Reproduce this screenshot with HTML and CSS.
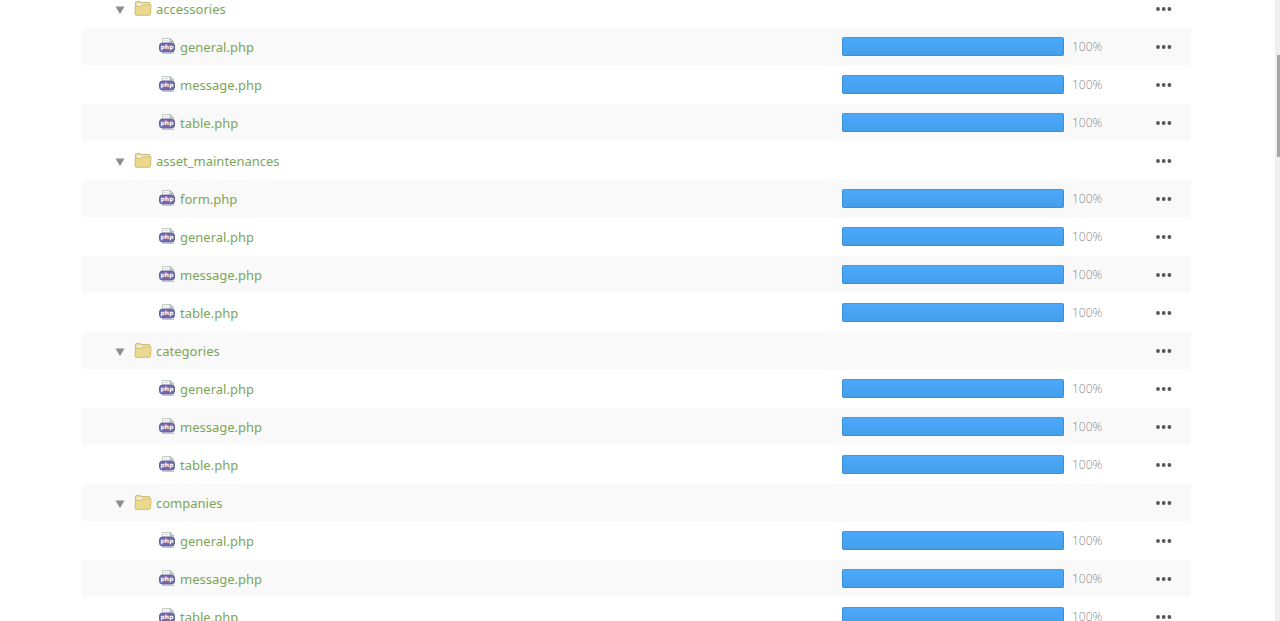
FILE: index.html
```html
<!DOCTYPE html>
<html lang="en">
<head>
    <meta charset="UTF-8">
    <meta name="viewport" content="width=device-width, initial-scale=1.0">
    <title>Files</title>
    <link rel="stylesheet" href="styles.css">
</head>
<body>
    <!-- Icons shared by all rows -->
    <svg class="sprite" aria-hidden="true">
        <symbol id="icon-arrow" viewBox="0 0 10 8">
            <path d="M0.5 0.5h9L5 8z" fill="#8c8c8c"/>
        </symbol>
        <symbol id="icon-folder" viewBox="0 0 18 16">
            <path d="M1.5 14V2.4c0-.5.3-.9.8-.9h3.6l1.2 1h8c.6 0 1 .4 1 1V7l-.6 7z" fill="#ead995" stroke="#cdbb78"/>
            <path d="M2.6 3.6h12.8v3H2.6z" fill="#f7f3e2"/>
            <path d="M1.2 14.2V7c0-.4.3-.7.7-.7h5.3l1.3-1.5h7.9c.5 0 .8.3.7.8l-.8 8.8c0 .5-.4.9-.9.9H2c-.4 0-.8-.4-.8-1.1z" fill="#ebda8e" stroke="#d2be72"/>
        </symbol>
        <symbol id="icon-php" viewBox="0 0 16 16">
            <path d="M3.5 15.5V.5h7.5l3.5 3.3v11.7z" fill="#fafafa" stroke="#c3cac6"/>
            <path d="M11 .5v3.3h3.5z" fill="#dfe5e1" stroke="#a9b5ae"/>
            <path d="M5 2.5h4" stroke="#dcdfdd"/>
            <rect x="0.5" y="5" width="15" height="9" rx="3" fill="#6e6bad" stroke="#65629f"/>
            <text class="php-label" x="8" y="11" text-anchor="middle">php</text>
        </symbol>
        <symbol id="icon-dots" viewBox="0 0 16 4">
            <circle cx="2" cy="2" r="1.9"/>
            <circle cx="7.7" cy="2" r="1.9"/>
            <circle cx="13.4" cy="2" r="1.9"/>
        </symbol>
    </svg>

    <main class="content">
        <table class="files">
            <tbody id="files"></tbody>
        </table>
    </main>
    <div class="scrollbar">
        <div class="scrollbar-thumb"></div>
    </div>

    <script src="script.js"></script>
</body>
</html>
```

FILE: styles.css
```css
body {
    display: flex;
    height: 100vh;
    margin: 0;
    overflow: hidden;
    background-color: #fff;
    font-family: 'Open Sans', sans-serif;
    font-size: 13px;
}

.sprite {
    display: none;
}

.content {
    flex: 1;
    padding: 0 84px 0 82px;
}

/* The list is scrolled part of the way into its first row */
.files {
    width: 100%;
    margin-top: -11px;
    border-collapse: collapse;
    table-layout: fixed;
}

.files td {
    height: 37px;
    padding: 0;
    border-top: 1px solid #fff;
}

.files tr:nth-child(even) {
    background-color: #f9f9f9;
}

.files .progress-cell {
    width: 314px;
}

.files .menu-cell {
    width: 35px;
}

.name {
    display: flex;
    align-items: center;
    gap: 4px;
    padding-left: 33px;
}

.name.file {
    gap: 5px;
    padding-left: 77px;
}

.name a {
    color: #7ba656;
    font-family: 'Noto Sans', 'Open Sans', sans-serif;
    line-height: 20px;
    text-decoration: none;
}

.name a:hover {
    text-decoration: underline;
}

.toggle,
.menu {
    display: flex;
    padding: 0;
    border: none;
    background: none;
    cursor: pointer;
}

.toggle {
    margin: 2px 5px 0 0;
}

.icon-arrow {
    width: 10px;
    height: 8px;
}

.icon-folder {
    width: 18px;
    height: 16px;
    margin-bottom: 2px;
}

.icon-php {
    width: 16px;
    height: 16px;
    margin-bottom: 2px;
}

.php-label {
    fill: #fff;
    font-family: 'DejaVu Sans', sans-serif;
    font-size: 6px;
    font-weight: bold;
}

.icon-dots {
    width: 16px;
    height: 4px;
    fill: #555;
}

.progress {
    display: flex;
    align-items: center;
    gap: 8px;
}

.track {
    width: 222px;
}

.bar {
    box-sizing: border-box;
    height: 19px;
    border: 1px solid #3b8ed6;
    border-top-color: #4299e2;
    border-radius: 2px;
    background: linear-gradient(#4ca8fb, #459fea);
}

.percent {
    color: #888;
    font-size: 12px;
    font-weight: 300;
    line-height: 20px;
}

.scrollbar {
    width: 5px;
    background-color: #f0f0f0;
}

.scrollbar-thumb {
    height: 102px;
    margin: 55px 0 0 2px;
    background-color: #a6a6a6;
}
```

FILE: script.js
```js
const folders = [
    { name: 'accessories', files: ['general.php', 'message.php', 'table.php'] },
    { name: 'asset_maintenances', files: ['form.php', 'general.php', 'message.php', 'table.php'] },
    { name: 'categories', files: ['general.php', 'message.php', 'table.php'] },
    { name: 'companies', files: ['general.php', 'message.php', 'table.php'] }
];

function icon(name) {
    return `<svg class="icon-${name}" aria-hidden="true"><use href="#icon-${name}"/></svg>`;
}

function menuCell() {
    return `<td class="menu-cell"><button class="menu" aria-label="Actions">${icon('dots')}</button></td>`;
}

function folderRow(name) {
    return `<tr>
        <td><div class="name"><button class="toggle" aria-label="Collapse">${icon('arrow')}</button>${icon('folder')}<a href="#">${name}</a></div></td>
        <td class="progress-cell"></td>
        ${menuCell()}
    </tr>`;
}

function fileRow(name, percent) {
    return `<tr>
        <td><div class="name file">${icon('php')}<a href="#">${name}</a></div></td>
        <td class="progress-cell"><div class="progress">
            <div class="track"><div class="bar" style="width: ${percent}%"></div></div>
            <span class="percent">${percent}%</span>
        </div></td>
        ${menuCell()}
    </tr>`;
}

document.getElementById('files').innerHTML = folders
    .map(folder => folderRow(folder.name) + folder.files.map(file => fileRow(file, 100)).join(''))
    .join('');
```
